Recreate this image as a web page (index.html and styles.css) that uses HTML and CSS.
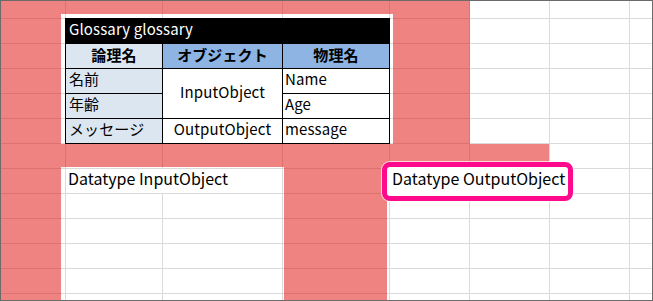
FILE: index.html
```html
<!DOCTYPE html>
<html lang="ja">
<head>
<meta charset="utf-8">
<title>Glossary</title>
<link rel="stylesheet" href="styles.css">
</head>
<body>
<div class="sheet">
  <div class="gloss">
    <div class="g-title">Glossary glossary</div>
    <div class="g-head g-keyhead">論理名</div>
    <div class="g-head">オブジェクト</div>
    <div class="g-head">物理名</div>
    <div class="g-key">名前</div>
    <div class="g-obj g-span2">InputObject</div>
    <div class="g-val">Name</div>
    <div class="g-key">年齢</div>
    <div class="g-val">Age</div>
    <div class="g-key">メッセージ</div>
    <div class="g-obj">OutputObject</div>
    <div class="g-val">message</div>
  </div>
  <div class="label label-in">Datatype InputObject</div>
  <div class="label label-out">Datatype OutputObject</div>
  <div class="mask">
    <span class="m m1"></span>
    <span class="m m2"></span>
    <span class="m m3"></span>
    <span class="m m4"></span>
    <span class="m m5"></span>
    <span class="m m6"></span>
  </div>
</div>
</body>
</html>
```
FILE: styles.css
```css
html, body { margin: 0; padding: 0; }
body {
  font-family: "Noto Sans CJK JP", sans-serif;
  font-size: 15px;
  color: #000;
  background: #fff;
}
.sheet {
  position: relative;
  width: 653px;
  height: 301px;
  box-sizing: border-box;
  border: 1px solid #6b6b6b;
  overflow: hidden;
  display: grid;
  grid-template-columns: 64px 96px 119px 106px 79px 79px 79px 22px;
  grid-template-rows: 17px repeat(11, 24px) 6px;
  gap: 1px;
  background-color: #fff;
  background-image:
    linear-gradient(to right,
      transparent 64px, #dadada 64px 65px,
      transparent 65px 161px, #dadada 161px 162px,
      transparent 162px 281px, #dadada 281px 282px,
      transparent 282px 388px, #dadada 388px 389px,
      transparent 389px 468px, #dadada 468px 469px,
      transparent 469px 548px, #dadada 548px 549px,
      transparent 549px 628px, #dadada 628px 629px,
      transparent 629px),
    repeating-linear-gradient(to bottom,
      transparent 0 17px, #dadada 17px 18px, transparent 18px 25px);
}
.gloss {
  grid-column: 2 / 5;
  grid-row: 2 / 7;
  margin: -1px;
  display: grid;
  grid-template-columns: 96px 119px 106px;
  grid-template-rows: repeat(5, 24px);
  gap: 1px;
  background: #000;
  border: 1px solid #000;
}
.gloss > div {
  display: flex;
  align-items: center;
  background: #fff;
  white-space: nowrap;
  line-height: 1;
  letter-spacing: 0.12px;
  padding-bottom: 5px;
}
.gloss > .g-title {
  grid-column: 1 / -1;
  background: #000;
  color: #fff;
  padding-left: 3px;
}
.gloss > .g-head {
  justify-content: center;
  font-weight: bold;
  background: #8db4e2;
  padding-bottom: 4px;
}
.gloss > .g-keyhead { background: #dce6f1; }
.gloss > .g-key {
  background: #dce6f1;
  padding-left: 3px;
}
.gloss > .g-obj { justify-content: center; }
.gloss > .g-span2 { grid-row: span 2; }
.gloss > .g-val { padding-left: 2px; }

.label {
  grid-row: 8;
  background: #fff;
  white-space: nowrap;
  padding: 0 0 7px 2px;
  font-size: 16px;
  display: flex;
  align-items: center;
  line-height: 1;
}
.label-in { grid-column: 2 / 4; }
.label-out {
  grid-column: 5 / 8;
  position: relative;
  z-index: 2;
}
.label-out::before {
  content: "";
  position: absolute;
  left: -8px;
  top: -7px;
  width: 191px;
  height: 39px;
  box-sizing: border-box;
  border: 5px solid #ff0a8c;
  border-radius: 8px;
  background: #fff;
  box-shadow: 0 0 0 1px rgba(255, 255, 255, 0.7);
  z-index: -1;
}
.mask {
  position: absolute;
  top: -1px;
  left: -1px;
  width: 653px;
  height: 301px;
  pointer-events: none;
  z-index: 1;
}
.m {
  position: absolute;
  background: rgba(224, 30, 25, 0.55);
}
.m1 { left: 0; top: 0; width: 470px; height: 14px; }
.m2 { left: 0; top: 14px; width: 61px; height: 287px; }
.m3 { left: 393px; top: 14px; width: 77px; height: 130px; }
.m4 { left: 61px; top: 144px; width: 488px; height: 19px; }
.m5 { left: 61px; top: 163px; width: 326px; height: 4px; }
.m6 { left: 284px; top: 167px; width: 103px; height: 134px; }
```
